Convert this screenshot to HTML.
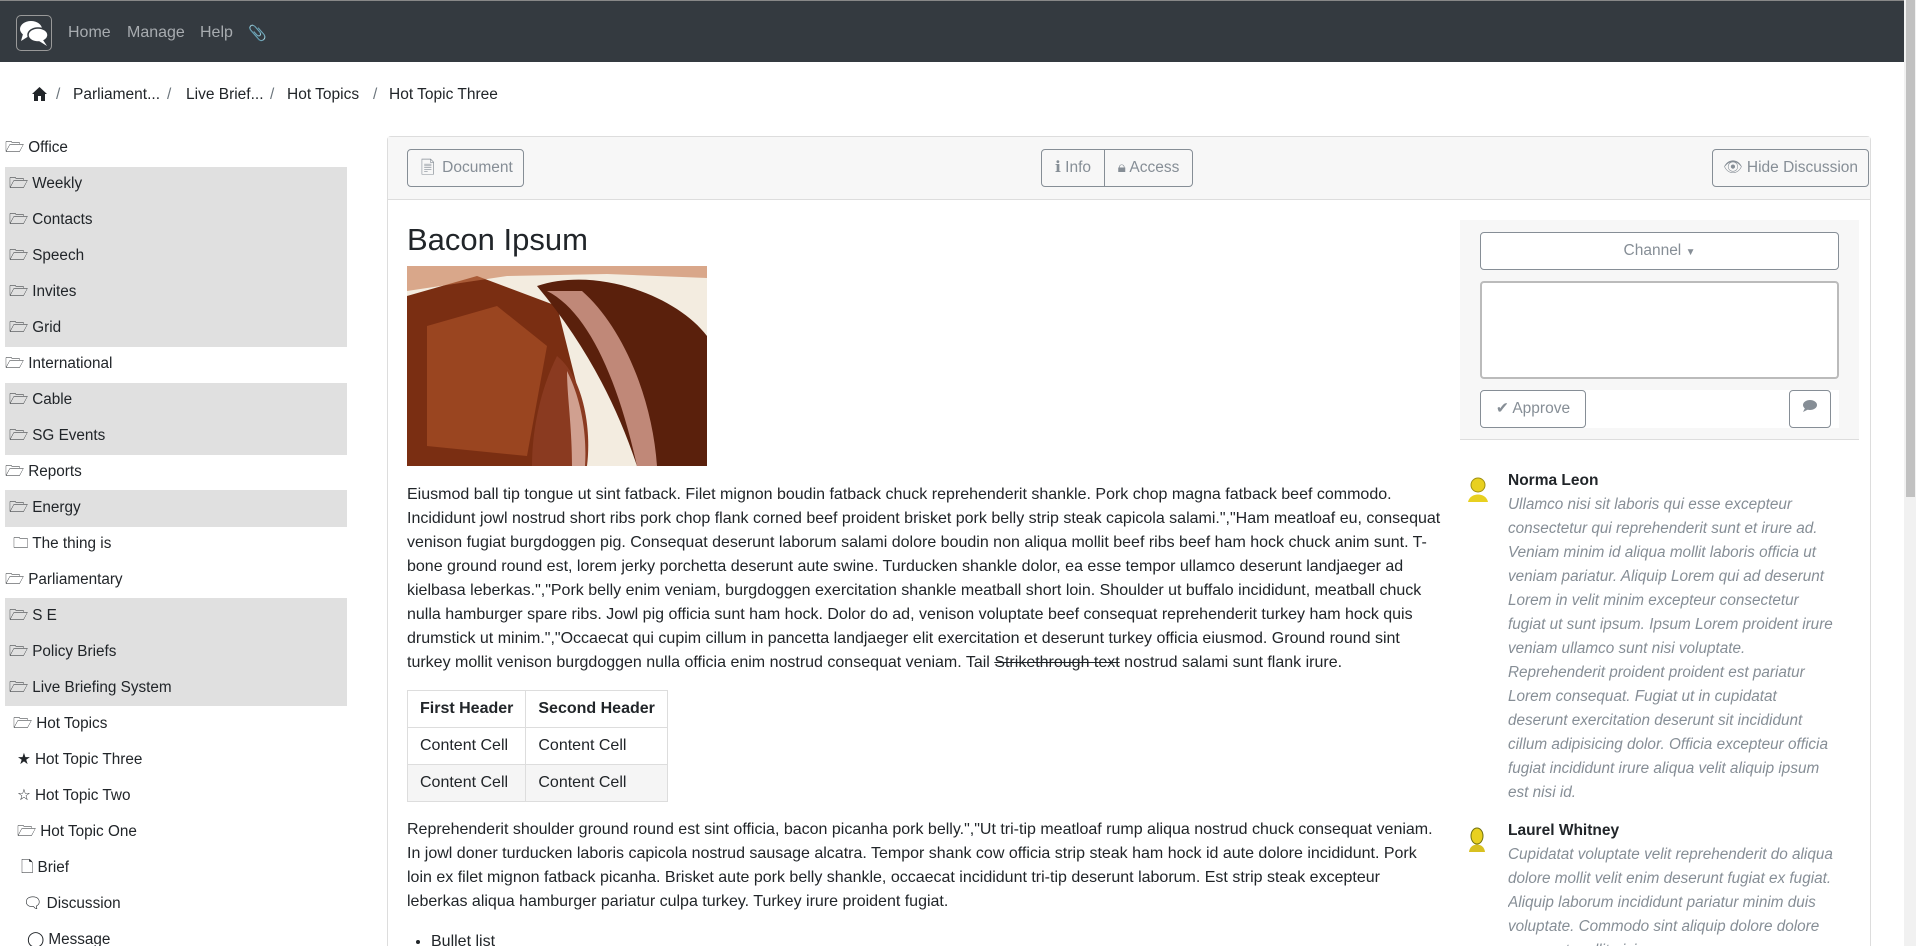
<!DOCTYPE html>
<html style="width:1916px;height:946px;overflow:hidden"><head><meta charset="utf-8"><style>
*{box-sizing:border-box;margin:0;padding:0}
body{width:1916px;height:946px;overflow:hidden;font-family:"Liberation Sans",sans-serif;color:#212529;background:#fff;position:relative}
.nav{position:absolute;left:0;top:0;width:1904px;height:62px;background:#343a40;border-top:1px solid #888}
.nav .logo{position:absolute;left:16px;top:14px;width:36px;height:36px;border:1px solid #999;border-radius:5px}
.nav a{position:absolute;top:23px;color:#a8acb0;font-size:16px}
.sb{position:absolute;right:0;top:0;width:12px;height:946px;background:#f1f1f1}
.sb div{position:absolute;left:2px;top:0;width:9px;height:497px;background:#c1c1c1}
.bc{position:absolute;top:86px;left:0;font-size:15.5px;color:#212529}
.bc span{position:absolute;white-space:nowrap}
.bc .s{color:#6c757d}
.side{position:absolute;left:0;top:130px;width:350px;font-size:15.3px}
.side div{position:absolute;height:36px;line-height:36px;white-space:nowrap;color:#212529}
.shade{position:absolute;left:5px;width:342px;background:#e0e0e0}
.panel{position:absolute;left:387px;top:136px;width:1484px;height:810px;border:1px solid #ddd;border-bottom:none;border-radius:4px 4px 0 0}
.ph{position:absolute;left:0;top:0;width:100%;height:63px;background:#f7f7f7;border-bottom:1px solid #ddd}
.btn{position:absolute;height:38px;border:1px solid #868e96;border-radius:4px;color:#868e96;font-size:15.5px;line-height:36px;text-align:center;background:transparent;white-space:nowrap;font-family:"Liberation Sans",sans-serif}
.content{position:absolute;left:407px;top:0;width:1035px;height:946px;overflow:hidden;font-size:16px;line-height:24px;color:#212529}
p{margin:0}
table{border-collapse:collapse;font-size:16px}
td,th{border:1px solid #ddd;padding:0 12px;height:37px;text-align:left}
.disc{position:absolute;left:1460px;top:220px;width:399px;height:220px;background:#f7f7f7;border-bottom:1px solid #ddd}
.cm{position:absolute;left:1508px;width:330px;font-size:15.3px;line-height:24px}
.cm b{display:block;color:#212529;font-size:15.5px}
.cm i{color:#868e96}
.clip{position:absolute;left:0;top:0;width:1916px;height:946px;overflow:hidden}
</style></head><body><div class="clip">
<div class="nav">
 <div class="logo"><svg width="34" height="34" viewBox="0 0 34 34"><ellipse cx="14" cy="13" rx="11" ry="8" fill="#fff"/><path d="M6 18 L4 25 L12 20Z" fill="#fff"/><ellipse cx="21" cy="19" rx="10" ry="7" fill="#fff" stroke="#343a40" stroke-width="1.5"/><path d="M26 24 L30 30 L22 25Z" fill="#fff"/></svg></div>
 <a style="left:68px">Home</a><a style="left:127px">Manage</a><a style="left:200px">Help</a><a style="left:248px;font-size:15px">&#128206;</a>
</div>
<div class="sb"><div></div></div>
<div class="bc">
 <span style="left:32px;top:1px"><svg width="15" height="14" viewBox="0 0 15 14"><path d="M7.5 0 L15 7 L13 7 L13 14 L9 14 L9 9 L6 9 L6 14 L2 14 L2 7 L0 7Z" fill="#212529"/></svg></span><span class="s" style="left:56px">/</span>
 <span style="left:73px">Parliament...</span><span class="s" style="left:167px">/</span>
 <span style="left:186px">Live Brief...</span><span class="s" style="left:270px">/</span>
 <span style="left:287px">Hot Topics</span><span class="s" style="left:373px">/</span>
 <span style="left:389px">Hot Topic Three</span>
</div>
<div class="side">
 <div class="shade" style="top:37px;height:180px"></div>
 <div class="shade" style="top:253px;height:72px"></div>
 <div class="shade" style="top:360px;height:37px"></div>
 <div class="shade" style="top:468px;height:108px"></div>
 <div style="left:5px;top:0">🗁 Office</div>
 <div style="left:9px;top:36px">🗁 Weekly</div>
 <div style="left:9px;top:72px">🗁 Contacts</div>
 <div style="left:9px;top:108px">🗁 Speech</div>
 <div style="left:9px;top:144px">🗁 Invites</div>
 <div style="left:9px;top:180px">🗁 Grid</div>
 <div style="left:5px;top:216px">🗁 International</div>
 <div style="left:9px;top:252px">🗁 Cable</div>
 <div style="left:9px;top:288px">🗁 SG Events</div>
 <div style="left:5px;top:324px">🗁 Reports</div>
 <div style="left:9px;top:360px">🗁 Energy</div>
 <div style="left:13px;top:396px">🗀 The thing is</div>
 <div style="left:5px;top:432px">🗁 Parliamentary</div>
 <div style="left:9px;top:468px">🗁 S E</div>
 <div style="left:9px;top:504px">🗁 Policy Briefs</div>
 <div style="left:9px;top:540px">🗁 Live Briefing System</div>
 <div style="left:13px;top:576px">🗁 Hot Topics</div>
 <div style="left:17px;top:612px">★ Hot Topic Three</div>
 <div style="left:17px;top:648px">☆ Hot Topic Two</div>
 <div style="left:17px;top:684px">🗁 Hot Topic One</div>
 <div style="left:21px;top:720px">🗋 Brief</div>
 <div style="left:23px;top:756px">🗨 Discussion</div>
 <div style="left:27px;top:792px">◯ Message</div>
</div>
<div class="panel"><div class="ph"></div></div>
<div class="btn" style="left:407px;top:149px;width:117px">&#128196;&#xFE0E; Document</div>
<div class="btn" style="left:1041px;top:149px;width:64px;border-radius:4px 0 0 4px">ℹ Info</div>
<div class="btn" style="left:1104px;top:149px;width:89px;border-radius:0 4px 4px 0">&#128274;&#xFE0E; Access</div>
<div class="btn" style="left:1712px;top:149px;width:157px">&#128065;&#xFE0E; Hide Discussion</div>
<div class="content">
 <div style="position:absolute;top:220px;font-size:31px;line-height:40px;color:#212529">Bacon Ipsum</div>
 <svg style="position:absolute;top:266px" width="300" height="200" viewBox="0 0 300 200">
  <rect width="300" height="200" fill="#f3ece0"/>
  <path d="M0 30 L70 10 L150 40 L170 120 L150 200 L0 200Z" fill="#7a2e12"/>
  <path d="M20 60 L90 40 L140 80 L120 190 L20 180Z" fill="#9a4520"/>
  <path d="M130 20 C190 0 270 30 300 70 L300 200 L230 200 C210 140 180 80 130 20Z" fill="#5a200c"/>
  <path d="M140 25 C180 45 210 110 230 200 L250 200 C245 130 215 60 175 25Z" fill="#c08878"/>
  <path d="M150 90 C175 110 185 160 180 200 L125 200 C125 160 135 120 150 90Z" fill="#8a3a20"/>
  <path d="M160 105 C175 135 180 170 178 200 L165 200 C165 160 160 130 160 105Z" fill="#d0a090"/>
  <path d="M0 0 L300 0 L300 12 L200 8 L100 10 L0 25Z" fill="#c87a50" opacity=".6"/>
 </svg>
 <p style="position:absolute;top:483px;width:1035px">Eiusmod ball tip tongue ut sint fatback. Filet mignon boudin fatback chuck reprehenderit shankle. Pork chop magna fatback beef commodo. Incididunt jowl nostrud short ribs pork chop flank corned beef proident brisket pork belly strip steak capicola salami.","Ham meatloaf eu, consequat venison fugiat burgdoggen pig. Consequat deserunt laborum salami dolore boudin non aliqua mollit beef ribs beef ham hock chuck anim sunt. T-bone ground round est, lorem jerky porchetta deserunt aute swine. Turducken shankle dolor, ea esse tempor ullamco deserunt landjaeger ad kielbasa leberkas.","Pork belly enim veniam, burgdoggen exercitation shankle meatball short loin. Shoulder ut buffalo incididunt, meatball chuck nulla hamburger spare ribs. Jowl pig officia sunt ham hock. Dolor do ad, venison voluptate beef consequat reprehenderit turkey ham hock quis drumstick ut minim.","Occaecat qui cupim cillum in pancetta landjaeger elit exercitation et deserunt turkey officia eiusmod. Ground round sint turkey mollit venison burgdoggen nulla officia enim nostrud consequat veniam. Tail <s>Strikethrough text</s> nostrud salami sunt flank irure.</p>
 <table style="position:absolute;top:690px">
  <tr><th>First Header</th><th>Second Header</th></tr>
  <tr><td>Content Cell</td><td>Content Cell</td></tr>
  <tr style="background:#f5f5f5"><td>Content Cell</td><td>Content Cell</td></tr>
 </table>
 <p style="position:absolute;top:818px;width:1035px">Reprehenderit shoulder ground round est sint officia, bacon picanha pork belly.","Ut tri-tip meatloaf rump aliqua nostrud chuck consequat veniam. In jowl doner turducken laboris capicola nostrud sausage alcatra. Tempor shank cow officia strip steak ham hock id aute dolore incididunt. Pork loin ex filet mignon fatback picanha. Brisket aute pork belly shankle, occaecat incididunt tri-tip deserunt laborum. Est strip steak excepteur leberkas aliqua hamburger pariatur culpa turkey. Turkey irure proident fugiat.</p>
 <ul style="position:absolute;top:930px;left:24px;width:300px"><li>Bullet list</li></ul>
</div>
<div class="disc">
 <div style="position:absolute;left:20px;top:170px;width:359px;height:38px;background:#fff"></div>
</div>
<div class="btn" style="left:1480px;top:232px;width:359px;background:#fff">Channel <span style="font-size:10px">▼</span></div>
<div style="position:absolute;left:1480px;top:281px;width:359px;height:98px;border:2px solid #bbb;border-radius:4px;background:#fff"></div>
<div class="btn" style="left:1480px;top:390px;width:106px;background:#fff">✔ Approve</div>
<div class="btn" style="left:1789px;top:390px;width:42px;background:#fff"><svg width="16" height="14" viewBox="0 0 16 14"><ellipse cx="8" cy="6" rx="7" ry="5" fill="#868e96"/><path d="M3 9 L1 13 L7 10Z" fill="#868e96"/></svg></div>
<svg style="position:absolute;left:1464px;top:476px" width="28" height="26"><circle cx="14" cy="9" r="7" fill="#e8d020" stroke="#a09010"/><path d="M4 26 C6 16 22 16 24 26Z" fill="#e8d020"/></svg>
<div class="cm" style="top:469px"><b>Norma Leon</b><i>Ullamco nisi sit laboris qui esse excepteur consectetur qui reprehenderit sunt et irure ad. Veniam minim id aliqua mollit laboris officia ut veniam pariatur. Aliquip Lorem qui ad deserunt Lorem in velit minim excepteur consectetur fugiat ut sunt ipsum. Ipsum Lorem proident irure veniam ullamco sunt nisi voluptate. Reprehenderit proident proident est pariatur Lorem consequat. Fugiat ut in cupidatat deserunt exercitation deserunt sit incididunt cillum adipisicing dolor. Officia excepteur officia fugiat incididunt irure aliqua velit aliquip ipsum est nisi id.</i></div>
<svg style="position:absolute;left:1466px;top:826px" width="24" height="26"><ellipse cx="11" cy="10" rx="6" ry="8" fill="#e8d020" stroke="#707010"/><path d="M3 26 C4 16 18 16 19 26Z" fill="#d8c020"/></svg>
<div class="cm" style="top:819px;height:127px;overflow:hidden"><b>Laurel Whitney</b><i>Cupidatat voluptate velit reprehenderit do aliqua dolore mollit velit enim deserunt fugiat ex fugiat. Aliquip laborum incididunt pariatur minim duis voluptate. Commodo sint aliquip dolore dolore occaecat mollit nisi.</i></div>
</div></body></html>
